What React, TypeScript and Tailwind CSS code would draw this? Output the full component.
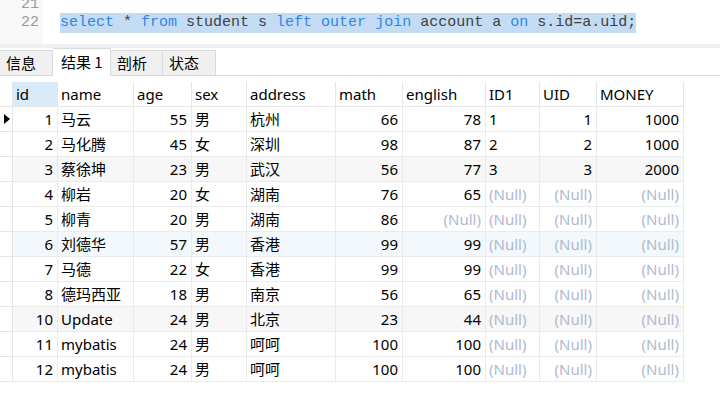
import React from "react";

type Cell = string | number | null;

const columns = [
  { name: "id", w: "w-[45px]", right: true },
  { name: "name", w: "w-[76px]", right: false },
  { name: "age", w: "w-[58px]", right: true },
  { name: "sex", w: "w-[55px]", right: false },
  { name: "address", w: "w-[89px]", right: false },
  { name: "math", w: "w-[67px]", right: true },
  { name: "english", w: "w-[83px]", right: true },
  { name: "ID1", w: "w-[54px]", right: false },
  { name: "UID", w: "w-[57px]", right: true },
  { name: "MONEY", w: "w-[87px]", right: true },
];

const rows: Cell[][] = [
  [1, "马云", 55, "男", "杭州", 66, 78, "1", 1, 1000],
  [2, "马化腾", 45, "女", "深圳", 98, 87, "2", 2, 1000],
  [3, "蔡徐坤", 23, "男", "武汉", 56, 77, "3", 3, 2000],
  [4, "柳岩", 20, "女", "湖南", 76, 65, null, null, null],
  [5, "柳青", 20, "男", "湖南", 86, null, null, null, null],
  [6, "刘德华", 57, "男", "香港", 99, 99, null, null, null],
  [7, "马德", 22, "女", "香港", 99, 99, null, null, null],
  [8, "德玛西亚", 18, "男", "南京", 56, 65, null, null, null],
  [10, "Update", 24, "男", "北京", 23, 44, null, null, null],
  [11, "mybatis", 24, "男", "呵呵", 100, 100, null, null, null],
  [12, "mybatis", 24, "男", "呵呵", 100, 100, null, null, null],
];

const tabs = [
  { label: "信息", w: "w-[53px]", active: false },
  { label: "结果 1", w: "w-[58px]", active: true },
  { label: "剖析", w: "w-[52px]", active: false },
  { label: "状态", w: "w-[53px]", active: false },
];

function Kw({ children }: { children: React.ReactNode }) {
  return <span className="text-[#2f86e6]">{children}</span>;
}

function Editor() {
  return (
    <div className="flex h-[44px] overflow-hidden font-['Liberation_Mono',monospace] text-[15px]">
      <div className="w-[43px] bg-[#f8f8f8] text-right pr-[4px] text-[#9a9a9a]">
        <div className="-mt-[4px] h-[17px] leading-[17px]">21</div>
        <div className="h-[20px] leading-[20px]">22</div>
      </div>
      <div className="flex-1 pl-[17px] text-[#3f3f3f] whitespace-pre">
        <div className="-mt-[4px] h-[17px]" />
        <div className="h-[20px] leading-[20px]">
          <span className="inline-block h-[20px] bg-[#c3dcf4]">
            <Kw>select</Kw> * <Kw>from</Kw> student s <Kw>left</Kw> <Kw>outer</Kw> <Kw>join</Kw> account a <Kw>on</Kw> s.id=a.uid;
          </span>
        </div>
      </div>
    </div>
  );
}

function Tabs() {
  return (
    <div className="flex items-end h-[28px] border-b border-[#d9d9d9] font-['Noto_Sans_CJK_SC',sans-serif] text-[15px] text-black">
      {tabs.map((t) =>
        t.active ? (
          <div
            key={t.label}
            className={`${t.w} h-[28px] -mb-px bg-white border-t border-r border-[#d9d9d9] pl-[8px] flex items-center`}
          >
            {t.label}
          </div>
        ) : (
          <div
            key={t.label}
            className={`${t.w} h-[25px] bg-[#f0f0f0] border-t border-r border-[#d9d9d9] pl-[6px] flex items-center`}
          >
            {t.label}
          </div>
        )
      )}
      <div className="flex-1" />
    </div>
  );
}

function Grid() {
  return (
    <div className="mt-[6px] w-fit font-['Noto_Sans','Noto_Sans_CJK_SC',sans-serif] text-[15px] text-black">
      <div className="flex h-[25px]">
        <div className="w-[13px] border-r border-b border-[#e6e6e6]" />
        {columns.map((c, i) => (
          <div
            key={c.name}
            className={`${c.w} border-r border-b border-[#e6e6e6] pl-[3px] flex items-center ${i === 0 ? "bg-[#d9eaf8]" : "bg-white"}`}
          >
            {c.name}
          </div>
        ))}
      </div>
      {rows.map((r, ri) => {
        const bg = ri === 5 ? "bg-[#f3f8fd]" : ri % 3 === 2 ? "bg-[#f7f7f7]" : "bg-white";
        return (
          <div key={ri} className={`flex h-[25px] ${bg}`}>
            <div className="w-[13px] bg-white border-r border-b border-[#e6e6e6] flex items-center pl-[4px]">
              {ri === 0 && (
                <svg width="6" height="10" viewBox="0 0 6 10">
                  <path d="M0 0 L6 5 L0 10 Z" fill="#000" />
                </svg>
              )}
            </div>
            {columns.map((c, ci) => {
              const v = r[ci];
              return (
                <div
                  key={ci}
                  className={`${c.w} border-r border-b border-[#ebebeb] flex items-center whitespace-nowrap overflow-hidden ${c.right ? "justify-end pr-[4px]" : "pl-[3px]"} ${v === null ? "text-[#adbad0]" : "text-black"}`}
                >
                  {v === null ? "(Null)" : v}
                </div>
              );
            })}
          </div>
        );
      })}
    </div>
  );
}

export default function App() {
  return (
    <div className="w-[720px] h-[401px] bg-white overflow-hidden">
      <Editor />
      <div className="h-[4px] bg-[#f0f0f0]" />
      <Tabs />
      <Grid />
    </div>
  );
}
